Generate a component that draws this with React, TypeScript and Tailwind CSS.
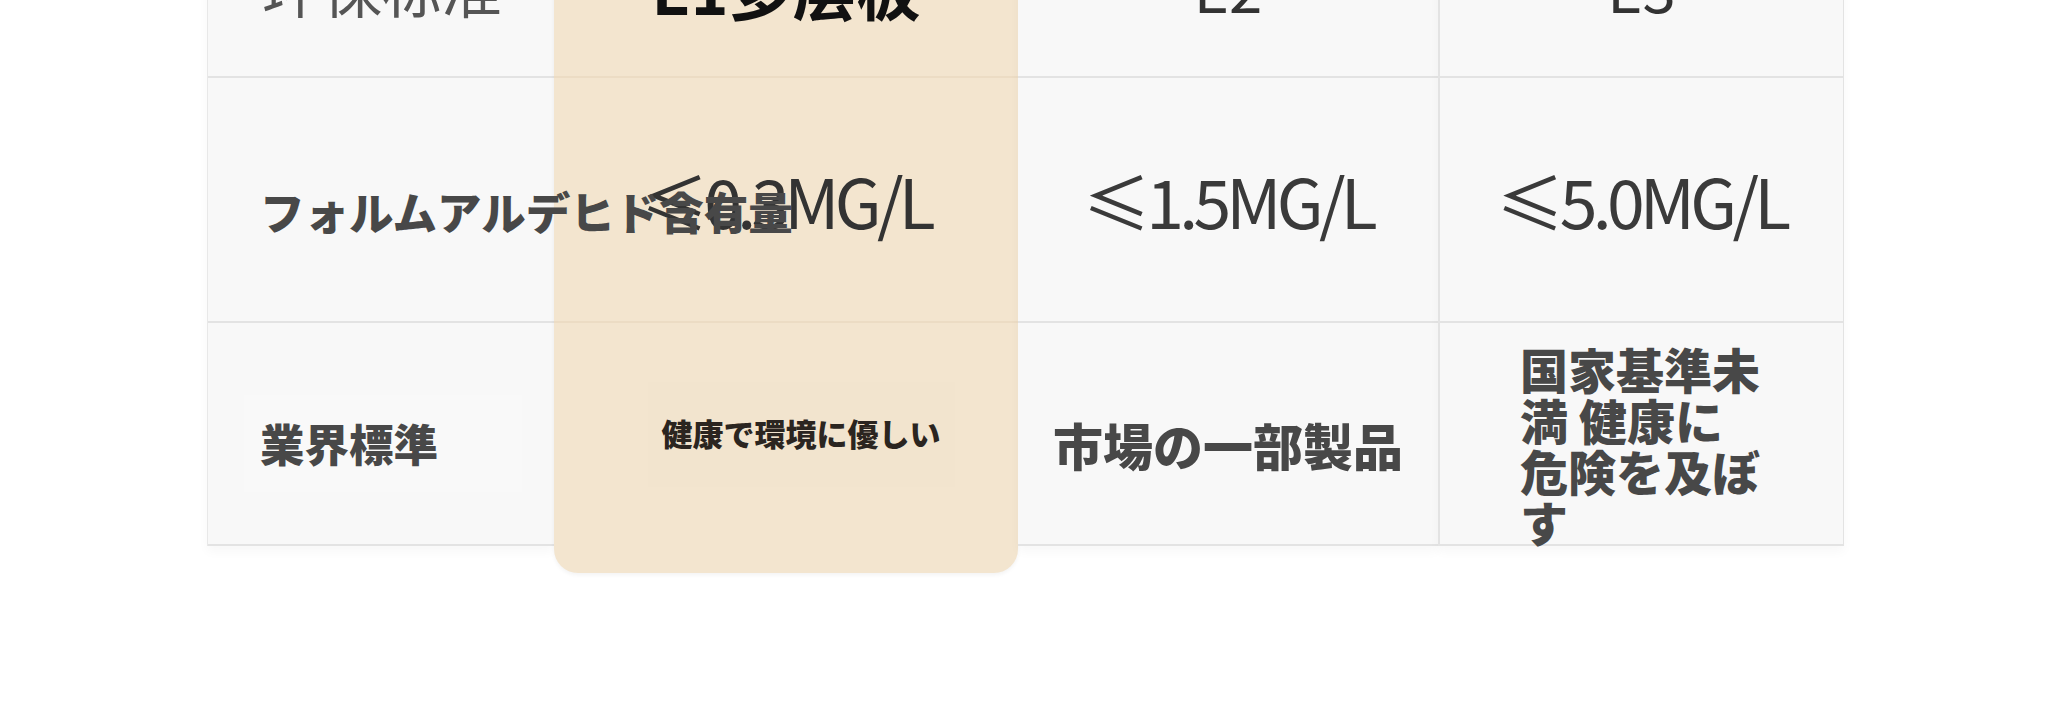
const jp = "font-['Noto_Sans_CJK_JP',sans-serif]";
const sc = "font-['Noto_Sans_CJK_SC',sans-serif]";

export default function App() {
  return (
    <div className="w-[2048px] h-[710px] bg-white overflow-hidden">
      <div className="ml-[207px] -mt-[102px] flex items-start">
        {/* 项目列 */}
        <div className="w-[347px] flex flex-col bg-[#f8f8f8] border-l border-[#e8e8e8] shadow-[0_6px_10px_rgba(0,0,0,0.03)]">
          <div className="h-[180px] border-b-2 border-[#e3e3e3] flex items-center pl-[54px]">
            <span className={`${sc} text-[60px] leading-none text-[#555]`}>环保标准</span>
          </div>
          <div className="h-[245px] border-b-2 border-[#e3e3e3] flex items-center pl-[52px] pt-[24px]">
            <span className={`${jp} relative z-10 whitespace-nowrap text-[44.5px] leading-none font-black text-[#484848]`}>
              フォルムアルデヒド含有量
            </span>
          </div>
          <div className="h-[223px] border-b-2 border-[#e3e3e3] flex items-center pl-[36px] pt-[20px]">
            <div className="w-[278px] h-[97px] bg-[#f9f9f9] flex items-center pl-[16px]">
              <span className={`${jp} text-[44.5px] leading-none font-black text-[#484848]`}>業界標準</span>
            </div>
          </div>
        </div>

        {/* 推荐列 */}
        <div className="w-[464px] flex flex-col bg-[#f3e5cf] rounded-b-[24px] shadow-[0_2px_4px_rgba(0,0,0,0.05)]">
          <div className="h-[180px] border-b-2 border-[#ecdcc4] flex items-center justify-center">
            <span className={`${sc} text-[64px] leading-none font-bold text-[#111]`}>E1多层板</span>
          </div>
          <div className="h-[245px] border-b-2 border-[#ecdcc4] flex items-center justify-center">
            <span className={`${sc} text-[68px] leading-none tracking-[-0.07em] text-[#333]`}>≤0.3MG/L</span>
          </div>
          <div className="h-[250px] flex items-center justify-center pl-[30px] pb-[28px]">
            <div className="px-[14px] py-[35px] bg-[#f2e4ce]">
              <span className={`${jp} text-[31px] leading-none font-black text-[#2b2520]`}>健康で環境に優しい</span>
            </div>
          </div>
        </div>

        {/* E2 */}
        <div className="w-[420px] flex flex-col bg-[#f8f8f8] shadow-[0_6px_10px_rgba(0,0,0,0.03)]">
          <div className="h-[180px] border-b-2 border-[#e3e3e3] flex items-center justify-center">
            <span className={`${sc} text-[60px] leading-none text-[#333]`}>E2</span>
          </div>
          <div className="h-[245px] border-b-2 border-[#e3e3e3] flex items-center justify-center">
            <span className={`${sc} text-[68px] leading-none tracking-[-0.07em] text-[#3a3a3a]`}>≤1.5MG/L</span>
          </div>
          <div className="h-[223px] border-b-2 border-[#e3e3e3] flex items-center justify-center pt-[20px]">
            <span className={`${jp} text-[50px] leading-none font-black text-[#484848]`}>市場の一部製品</span>
          </div>
        </div>

        {/* E3 */}
        <div className="w-[406px] flex flex-col bg-[#f8f8f8] border-l-2 border-r border-[#e3e3e3] shadow-[0_6px_10px_rgba(0,0,0,0.03)]">
          <div className="h-[180px] border-b-2 border-[#e3e3e3] flex items-center justify-center">
            <span className={`${sc} text-[60px] leading-none text-[#333]`}>E3</span>
          </div>
          <div className="h-[245px] border-b-2 border-[#e3e3e3] flex items-center justify-center">
            <span className={`${sc} text-[68px] leading-none tracking-[-0.07em] text-[#3a3a3a]`}>≤5.0MG/L</span>
          </div>
          <div className="h-[223px] border-b-2 border-[#e3e3e3] flex items-center pl-[80px] pt-[22px]">
            <p className={`${jp} w-[245px] text-[48px] leading-[51px] font-black text-[#484848]`}>
              国家基準未満 健康に危険を及ぼす
            </p>
          </div>
        </div>
      </div>
    </div>
  );
}
